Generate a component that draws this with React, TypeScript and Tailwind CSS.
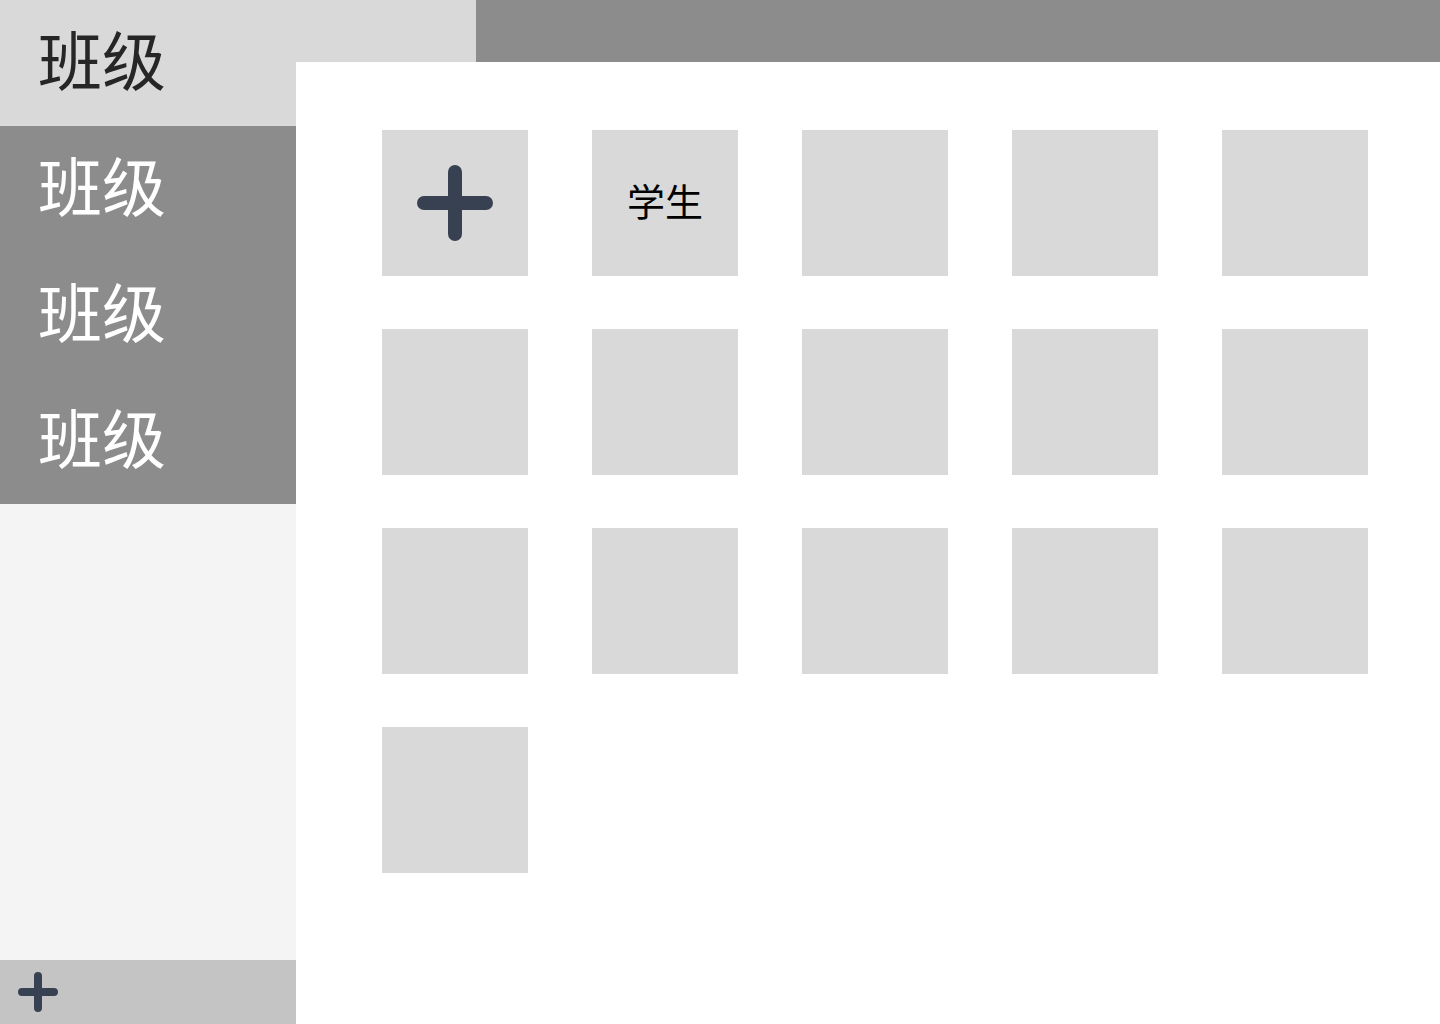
import React from "react";

const cjk = { fontFamily: '"Noto Sans CJK SC", "Noto Sans", sans-serif' };

const PlusIcon: React.FC<{ size: number; stroke: number }> = ({ size, stroke }) => (
  <svg width={size} height={size} viewBox={`0 0 ${size} ${size}`} fill="none">
    <path
      d={`M${size / 2} ${stroke / 2}V${size - stroke / 2}M${stroke / 2} ${size / 2}H${size - stroke / 2}`}
      stroke="#374151"
      strokeWidth={stroke}
      strokeLinecap="round"
    />
  </svg>
);

const classes = ["班级", "班级", "班级", "班级"];
const tiles = Array.from({ length: 16 }, (_, i) => i);

export default function App() {
  return (
    <div className="flex h-[1024px] w-[1440px] overflow-hidden bg-white" style={cjk}>
      {/* sidebar */}
      <aside className="flex w-[296px] shrink-0 flex-col bg-[#f4f4f4]">
        {classes.map((c, i) => (
          <div
            key={i}
            className={
              i === 0
                ? "flex h-[126px] items-center bg-[#d9d9d9] pb-3 pl-[38px] text-[64px] leading-none text-[#262626]"
                : "flex h-[126px] items-center bg-[#8c8c8c] pb-3 pl-[38px] text-[64px] leading-none text-white"
            }
          >
            {c}
          </div>
        ))}
        <div className="flex-1" />
        <div className="flex h-16 items-center bg-[#c4c4c4] pl-[18px]">
          <PlusIcon size={40} stroke={8} />
        </div>
      </aside>

      {/* right side */}
      <div className="flex flex-1 flex-col">
        <header className="flex h-[62px] shrink-0">
          <div className="w-[180px] bg-[#d9d9d9]" />
          <div className="flex-1 bg-[#8c8c8c]" />
        </header>
        <main className="flex-1 pl-[86px] pt-[68px]">
          <div className="grid grid-cols-[repeat(5,146px)] gap-x-16 gap-y-[53px]">
            {tiles.map((i) => (
              <div key={i} className="flex h-[146px] w-[146px] items-center justify-center bg-[#d9d9d9]">
                {i === 0 && <PlusIcon size={76} stroke={14} />}
                {i === 1 && <span className="pb-[6px] text-[38px] leading-none text-black">学生</span>}
              </div>
            ))}
          </div>
        </main>
      </div>
    </div>
  );
}
